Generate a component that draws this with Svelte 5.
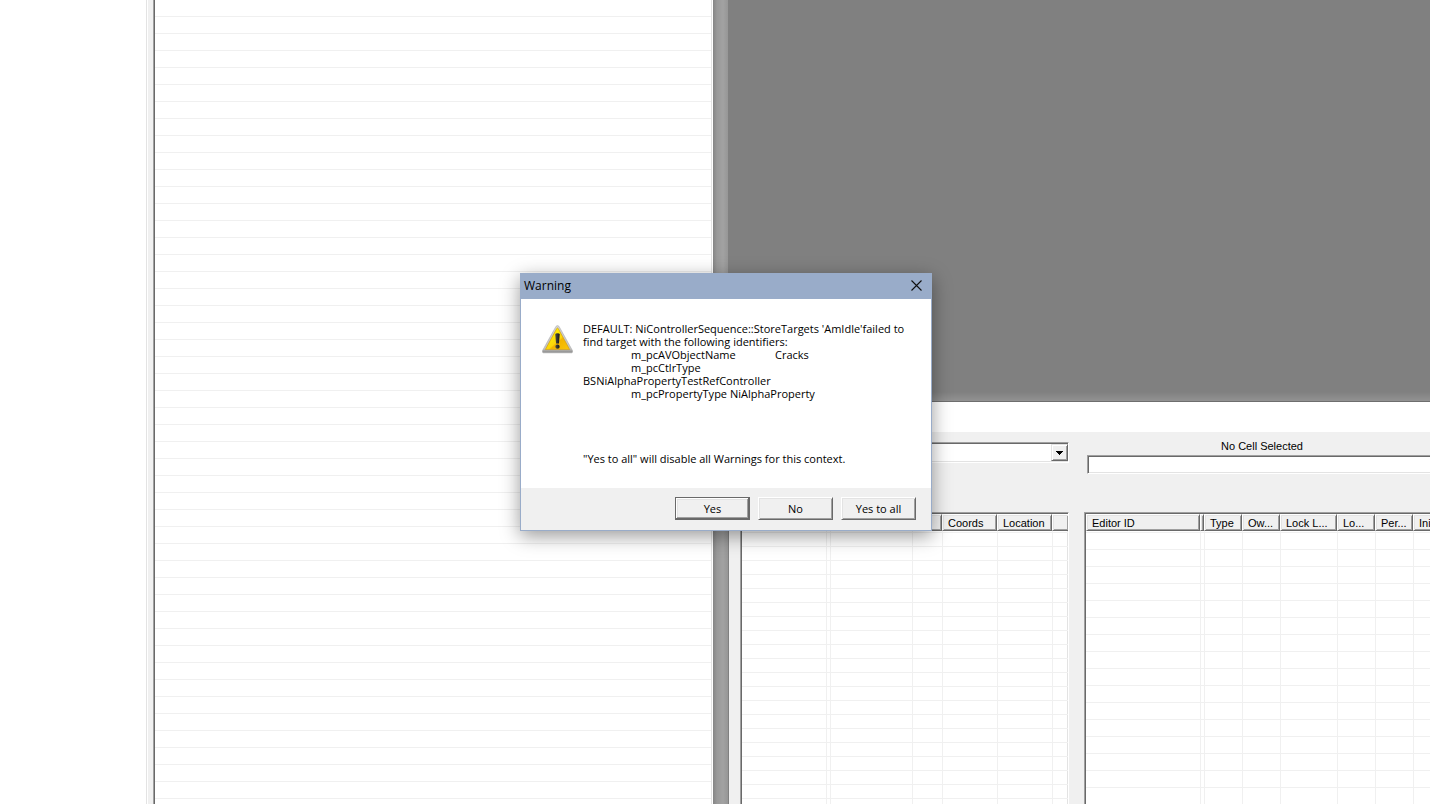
<script lang="ts">
  type Column = { label: string; width: number };

  const cellColumns: Column[] = [
    { label: '', width: 84 },
    { label: '', width: 4 },
    { label: '', width: 82 },
    { label: '', width: 30 },
    { label: 'Coords', width: 55 },
    { label: 'Location', width: 55 },
    { label: '', width: 17 },
  ];

  const refColumns: Column[] = [
    { label: 'Editor ID', width: 114 },
    { label: '', width: 4 },
    { label: 'Type', width: 38 },
    { label: 'Ow...', width: 38 },
    { label: 'Lock L...', width: 57 },
    { label: 'Lo...', width: 38 },
    { label: 'Per...', width: 38 },
    { label: 'Ini', width: 57 },
  ];

  const rows = Array.from({ length: 60 }, (_, i) => i);

  const message =
    "DEFAULT: NiControllerSequence::StoreTargets 'AmIdle'failed to find target with the following identifiers:\n" +
    '\tm_pcAVObjectName\tCracks\n' +
    '\tm_pcCtlrType\nBSNiAlphaPropertyTestRefController\n' +
    '\tm_pcPropertyType NiAlphaProperty';

  let open = $state(true);
  let worldspace = $state('');
  let filter = $state('');

  function close() {
    open = false;
  }
</script>

{#snippet grid(columns: Column[], label: string)}
  <table aria-label={label}>
    <colgroup>
      {#each columns as col}
        <col style="width: {col.width}px" />
      {/each}
    </colgroup>
    <thead>
      <tr>
        {#each columns as col}
          <th class:narrow={col.width < 10} scope="col">{col.label}</th>
        {/each}
      </tr>
    </thead>
    <tbody>
      {#each rows as row (row)}
        <tr>
          {#each columns as col}
            <td></td>
          {/each}
        </tr>
      {/each}
    </tbody>
  </table>
{/snippet}

<div class="editor">
  <aside class="tree"></aside>
  <section class="objects">
    <ul>
      {#each rows as row (row)}
        <li></li>
      {/each}
    </ul>
  </section>
  <div class="gutter"></div>

  <main>
    <div class="viewport"></div>
    <section class="cell-view">
      <div class="caption"></div>
      <div class="panes">
        <div class="pane cells">
          <div class="controls">
            <div class="combo">
              <select bind:value={worldspace} aria-label="World space">
                <option value=""></option>
              </select>
              <span class="arrow">
                <svg width="7" height="4" viewBox="0 0 7 4" shape-rendering="crispEdges">
                  <path d="M0 0h7v1H0zM1 1h5v1H1zM2 2h3v1H2zM3 3h1v1H3z" />
                </svg>
              </span>
            </div>
          </div>
          <div class="list">{@render grid(cellColumns, 'Cells')}</div>
        </div>
        <div class="pane refs">
          <div class="controls">
            <label for="filter">No Cell Selected</label>
            <input id="filter" type="text" bind:value={filter} />
          </div>
          <div class="list">{@render grid(refColumns, 'References')}</div>
        </div>
      </div>
    </section>
  </main>

  {#if open}
    <div class="dialog" role="alertdialog" aria-labelledby="dialog-title" aria-describedby="dialog-text">
      <header>
        <span id="dialog-title">Warning</span>
        <button class="close" aria-label="Close" onclick={close}>
          <svg width="11" height="11" viewBox="0 0 11 11">
            <path d="M0.5 0.5L10.5 10.5M10.5 0.5L0.5 10.5" fill="none" stroke="#111" stroke-width="1.1" />
          </svg>
        </button>
      </header>
      <div class="content">
        <svg class="warning" width="31" height="29" viewBox="0 0 32 30" aria-hidden="true">
          <defs>
            <linearGradient id="rim" x1="0" y1="0" x2="0" y2="1">
              <stop offset="0" stop-color="#d4d4d4" />
              <stop offset="0.85" stop-color="#c4c4c4" />
              <stop offset="1" stop-color="#858585" />
            </linearGradient>
            <linearGradient id="fill" x1="0" y1="0" x2="1" y2="1">
              <stop offset="0.2" stop-color="#fff000" />
              <stop offset="0.55" stop-color="#fcd60a" />
              <stop offset="0.6" stop-color="#f2b400" />
              <stop offset="1" stop-color="#f9c60c" />
            </linearGradient>
            <linearGradient id="mark" x1="0" y1="0" x2="1" y2="0">
              <stop offset="0" stop-color="#4b4b4b" />
              <stop offset="1" stop-color="#151515" />
            </linearGradient>
          </defs>
          <path d="M14.4 1.5Q16 -0.7 17.6 1.5L31.5 26.5Q32 28.8 30.5 28.8H1.5Q0 28.8 0.5 26.5Z" fill="url(#rim)" stroke="#aaa" stroke-width="0.6" />
          <path d="M15.2 3.7Q16 2.4 16.8 3.7L28.6 25.4H3.4Z" fill="url(#fill)" stroke="#d39b13" stroke-width="0.7" />
          <path d="M13.7 9.8Q13.7 8.6 16 8.6T18.3 9.8L17.5 19.2H14.5Z" fill="url(#mark)" />
          <circle cx="16" cy="22.4" r="2.2" fill="url(#mark)" />
        </svg>
        <div id="dialog-text">
          <p class="message">{message}</p>
          <p class="note">"Yes to all" will disable all Warnings for this context.</p>
        </div>
      </div>
      <footer>
        <button class="default" onclick={close}>Yes</button>
        <button onclick={close}>No</button>
        <button onclick={close}>Yes to all</button>
      </footer>
    </div>
  {/if}
</div>

<style>
  :global(body) {
    margin: 0;
    overflow: hidden;
  }
  .editor {
    position: relative;
    display: flex;
    height: 100vh;
    overflow: hidden;
    background: #f0f0f0;
    color: #000;
    font: 11px/13px 'Liberation Sans', Arial, sans-serif;
  }
  .editor * {
    box-sizing: border-box;
  }
  .tree {
    flex: 0 0 148px;
    background: #fff;
    border-right: 1px solid #fff;
    box-shadow: inset -1px 0 #e3e3e3;
  }
  .objects {
    flex: 0 0 560px;
    margin-left: 5px;
    overflow: hidden;
    background: #fff;
    border-left: 1px solid #a0a0a0;
    border-right: 1px solid #fff;
    box-shadow: inset 1px 0 #696969, inset -1px 0 #e3e3e3;
  }
  ul {
    margin: 0 1px;
    padding: 0;
    list-style: none;
  }
  li {
    height: 17px;
    border-bottom: 1px solid #f0f0f0;
  }
  .gutter {
    flex: 0 0 16px;
    background: linear-gradient(to right, #858585, #999 4px, #a2a2a2 10px, #969696);
    border-right: 1px solid #808080;
  }
  main {
    flex: 1;
    min-width: 0;
    display: flex;
    flex-direction: column;
  }
  .viewport {
    flex: 1;
    background: linear-gradient(to top, #929292, #808080 9px);
    border-bottom: 1px solid #6e6e6e;
  }
  .cell-view {
    flex: 0 0 50%;
    display: flex;
    flex-direction: column;
    min-height: 0;
  }
  .caption {
    flex: 0 0 30px;
    background: #fff;
  }
  .panes {
    flex: 1;
    display: flex;
    gap: 15px;
    min-height: 0;
    padding-left: 11px;
  }
  .pane {
    display: flex;
    flex-direction: column;
    min-width: 0;
  }
  .cells {
    flex: 0 0 329px;
    --row: 14px;
  }
  .refs {
    flex: 1;
    --row: 17px;
  }
  .controls {
    flex: 0 0 80px;
  }
  .combo {
    display: flex;
    height: 21px;
    margin-top: 10px;
    border: 1px solid;
    border-color: #a0a0a0 #fff #fff #a0a0a0;
    background: #fff;
    box-shadow: inset 1px 1px #696969, inset -1px -1px #e3e3e3;
  }
  .combo select {
    flex: 1;
    appearance: none;
    border: 0;
    background: none;
  }
  .arrow {
    display: flex;
    align-items: center;
    justify-content: center;
    width: 17px;
    margin: 1px 0 1px 1px;
    background: #f0f0f0;
    border: 1px solid;
    border-color: #e3e3e3 #696969 #696969 #e3e3e3;
    box-shadow: inset 1px 1px #fff, inset -1px -1px #a0a0a0;
    pointer-events: none;
  }
  .refs .controls {
    width: 350px;
    margin-left: 3px;
    padding-top: 8px;
  }
  label {
    display: block;
    text-align: center;
  }
  input {
    display: block;
    width: 100%;
    height: 19px;
    margin-top: 2px;
    padding: 0 3px;
    font: inherit;
    border: 1px solid;
    border-color: #a0a0a0 #fff #fff #a0a0a0;
    border-radius: 0;
    background: #fff;
    box-shadow: inset 1px 1px #696969, inset 0 -1px #e3e3e3;
  }
  .list {
    flex: 1;
    min-height: 0;
    overflow: hidden;
    padding: 1px 1px 0;
    background: #fff;
    border: 1px solid;
    border-color: #a0a0a0 #fff #fff #a0a0a0;
    border-bottom: 0;
    box-shadow: inset 1px 1px #696969, inset -1px 0 #e3e3e3;
  }
  .refs .list {
    border-right: 0;
    padding-right: 0;
    box-shadow: inset 1px 1px #696969;
  }
  table {
    width: 0;
    table-layout: fixed;
    border-collapse: separate;
    border-spacing: 0;
  }
  th {
    height: 17px;
    padding: 1px 5px 0;
    overflow: hidden;
    text-align: left;
    font-weight: normal;
    line-height: 13px;
    white-space: nowrap;
    background: #f0f0f0;
    border: 1px solid;
    border-color: #fff #696969 #696969 #fff;
    box-shadow: inset 1px 1px #e3e3e3, inset -1px -1px #a0a0a0;
  }
  th.narrow {
    padding: 0;
  }
  td {
    height: var(--row);
    padding: 0;
    border-left: 1px solid #f0f0f0;
    border-bottom: 1px solid #f0f0f0;
  }
  td:first-child {
    border-left: 0;
  }
  /* sliver of a row left visible under the header */
  tbody tr:first-child td {
    height: 2px;
  }
  .dialog {
    position: absolute;
    top: 273px;
    left: 520px;
    width: 412px;
    background: #fff;
    border: 1px solid #99acc9;
    box-shadow: 0 5px 18px rgba(0, 0, 0, 0.4);
    font: 11px/13px 'Open Sans', 'Noto Sans', sans-serif;
  }
  header {
    display: flex;
    align-items: center;
    justify-content: space-between;
    height: 25px;
    padding: 0 9px 2px 3px;
    background: #99acc9;
    font-size: 12px;
  }
  .close {
    display: flex;
    padding: 0;
    border: 0;
    background: none;
  }
  .content {
    display: flex;
    gap: 10px;
    padding: 23px 20px 23px 21px;
  }
  .warning {
    flex: none;
    margin-top: 3px;
  }
  p {
    margin: 0;
  }
  .message {
    width: 328px;
    white-space: pre-wrap;
    tab-size: 48px;
  }
  .note {
    margin-top: 52px;
  }
  footer {
    display: flex;
    justify-content: flex-end;
    gap: 8px;
    padding: 9px 15px 10px;
    background: #f0f0f0;
  }
  footer button {
    width: 75px;
    height: 23px;
    padding: 0 0 1px;
    color: inherit;
    font: inherit;
    background: #f0f0f0;
    border: 1px solid;
    border-color: #fff #696969 #696969 #fff;
    border-radius: 0;
    box-shadow: inset 1px 1px #e3e3e3, inset -1px -1px #a0a0a0;
  }
  footer .default {
    border-color: #696969;
    box-shadow: inset -1px -1px #696969, inset 1px 1px #fff, inset -2px -2px #a0a0a0, inset 2px 2px #e3e3e3;
  }
</style>
